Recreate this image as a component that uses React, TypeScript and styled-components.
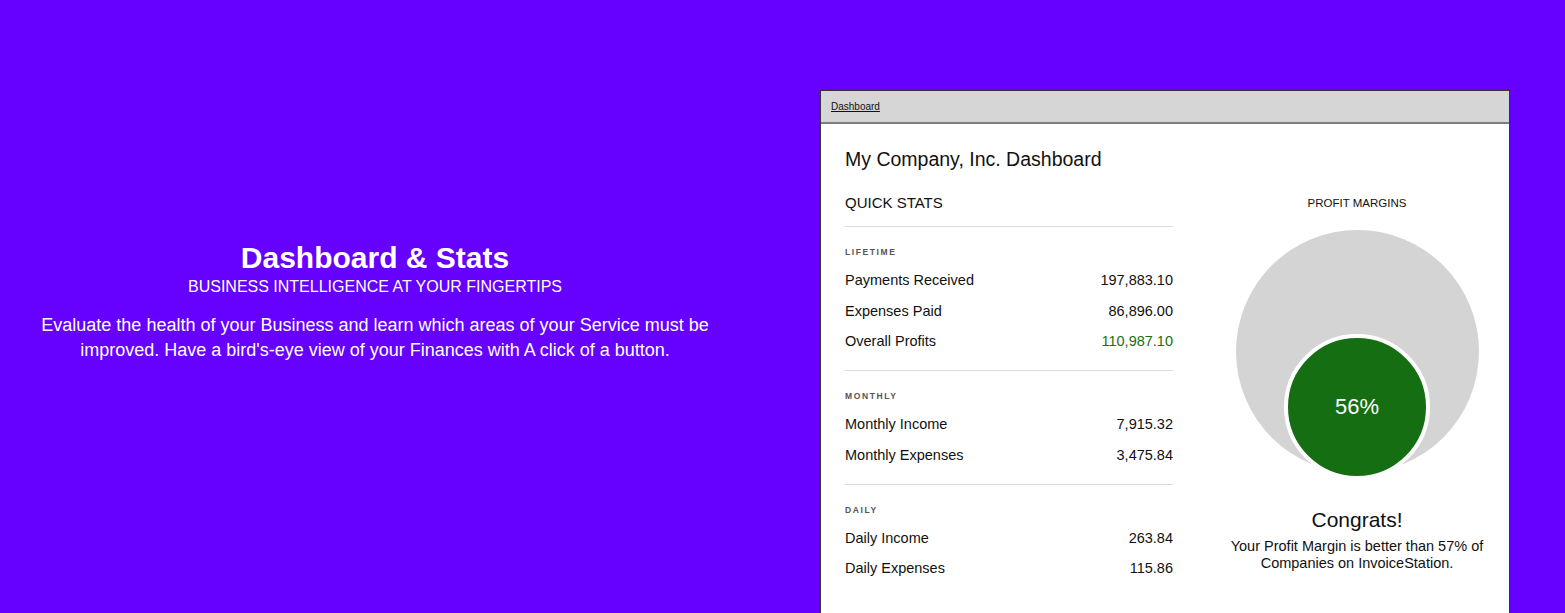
import styled, { createGlobalStyle } from "styled-components"

const Global = createGlobalStyle`
html, body {
  margin: 0;
  padding: 0;
  background: #6600ff;
  overflow: hidden;
}
body {
  font-family: "Liberation Sans", Arial, sans-serif;
}
`

const Page = styled.div`
display: flex;
align-items: flex-start;
height: 613px;
padding-top: 90px;
box-sizing: border-box;
`
const Intro = styled.div`
width: 750px;
margin-top: 150px;
text-align: center;
color: #fff;
`
const IntroTitle = styled.h1`
margin: 0;
font-size: 30px;
font-weight: bold;
line-height: 36px;
`
const IntroSub = styled.div`
font-size: 16px;
line-height: 22px;
text-transform: uppercase;
`
const IntroText = styled.p`
margin: 15px 0 0;
font-size: 18px;
line-height: 25px;
`

const Window = styled.div`
margin-left: 70px;
width: 688px;
height: 560px;
background: #fff;
border: 1px solid #333;
`
const TopBar = styled.div`
height: 31px;
background: #d6d6d6;
border-bottom: 2px solid #7d7d7d;
display: flex;
align-items: center;
padding-left: 10px;
`
const TabLink = styled.a`
font-size: 10px;
color: #111;
text-decoration: underline;
`
const Body = styled.div`
padding: 23px 0 0 24px;
`
const Heading = styled.h2`
margin: 0;
font-size: 19.5px;
font-weight: normal;
color: #111;
line-height: 24px;
`
const Columns = styled.div`
display: flex;
gap: 32px;
margin-top: 23px;
`
const Stats = styled.div`
width: 328px;
`
const StatsTitle = styled.div`
font-size: 15px;
color: #111;
line-height: 18px;
padding-bottom: 14px;
border-bottom: 1px solid #ddd;
`
const Section = styled.div<{ $last?: boolean }>`
padding: 20px 0 7.5px;
border-bottom: ${p => (p.$last ? "none" : "1px solid #ddd")};
`
const SectionLabel = styled.div`
font-size: 8.5px;
font-weight: bold;
letter-spacing: 1.6px;
color: #555;
line-height: 10px;
margin-bottom: 14px;
`
const Row = styled.div<{ $green?: boolean }>`
display: flex;
justify-content: space-between;
font-size: 14.5px;
line-height: 18px;
height: 30.5px;
color: #111;
span:last-child {
  color: ${p => (p.$green ? "#1a6e12" : "#111")};
}
`

const Chart = styled.div`
flex: 1;
display: flex;
flex-direction: column;
align-items: center;
`
const ChartTitle = styled.div`
font-size: 11.5px;
color: #111;
line-height: 18px;
`
const OuterCircle = styled.div`
margin-top: 18px;
width: 243px;
height: 243px;
border-radius: 50%;
background: #d4d4d4;
display: flex;
justify-content: center;
align-items: flex-end;
`
const InnerCircle = styled.div`
width: 138px;
height: 138px;
border-radius: 50%;
background: #166e12;
border: 4px solid #fff;
margin-bottom: -7px;
display: flex;
align-items: center;
justify-content: center;
color: #fff;
font-size: 22px;
`
const Congrats = styled.div`
margin-top: 35px;
font-size: 21px;
color: #111;
line-height: 24px;
`
const Note = styled.div`
margin-top: 6px;
font-size: 14.5px;
line-height: 17px;
color: #111;
text-align: center;
width: 280px;
`

const sections = [
  {
    label: "LIFETIME",
    rows: [
      ["Payments Received", "197,883.10"],
      ["Expenses Paid", "86,896.00"],
      ["Overall Profits", "110,987.10", true],
    ],
  },
  {
    label: "MONTHLY",
    rows: [
      ["Monthly Income", "7,915.32"],
      ["Monthly Expenses", "3,475.84"],
    ],
  },
  {
    label: "DAILY",
    rows: [
      ["Daily Income", "263.84"],
      ["Daily Expenses", "115.86"],
    ],
  },
] as { label: string; rows: [string, string, boolean?][] }[]

const App = () => {
  return (
    <Page>
      <Global />
      <Intro>
        <IntroTitle>Dashboard &amp; Stats</IntroTitle>
        <IntroSub>Business Intelligence at your fingertips</IntroSub>
        <IntroText>
          Evaluate the health of your Business and learn which areas of your Service must be
          <br />
          improved. Have a bird's-eye view of your Finances with A click of a button.
        </IntroText>
      </Intro>
      <Window>
        <TopBar>
          <TabLink>Dashboard</TabLink>
        </TopBar>
        <Body>
          <Heading>My Company, Inc. Dashboard</Heading>
          <Columns>
            <Stats>
              <StatsTitle>QUICK STATS</StatsTitle>
              {sections.map((s, i) => (
                <Section key={s.label} $last={i === sections.length - 1}>
                  <SectionLabel>{s.label}</SectionLabel>
                  {s.rows.map(([name, value, green]) => (
                    <Row key={name} $green={green}>
                      <span>{name}</span>
                      <span>{value}</span>
                    </Row>
                  ))}
                </Section>
              ))}
            </Stats>
            <Chart>
              <ChartTitle>PROFIT MARGINS</ChartTitle>
              <OuterCircle>
                <InnerCircle>56%</InnerCircle>
              </OuterCircle>
              <Congrats>Congrats!</Congrats>
              <Note>Your Profit Margin is better than 57% of Companies on InvoiceStation.</Note>
            </Chart>
          </Columns>
        </Body>
      </Window>
    </Page>
  )
}

export default App
